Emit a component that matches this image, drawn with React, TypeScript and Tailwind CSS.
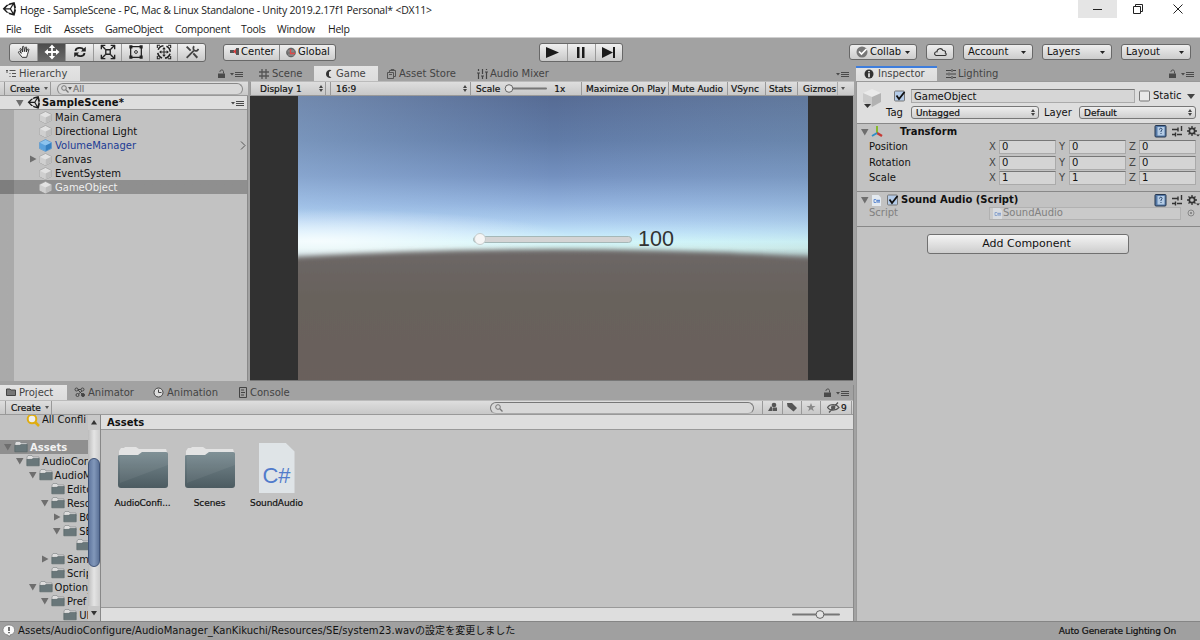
import { ReactNode } from "react";
import clsx from "clsx";

const menus = [
  { name: "File", width: "w-[28px]" },
  { name: "Edit", width: "w-[30px]" },
  { name: "Assets", width: "w-[41px]" },
  { name: "GameObject", width: "w-[70px]" },
  { name: "Component", width: "w-[66px]" },
  { name: "Tools", width: "w-[36px]" },
  { name: "Window", width: "w-[51px]" },
  { name: "Help", width: "w-[30px]" },
];

const sceneObjects = [
  { name: "Main Camera" },
  { name: "Directional Light" },
  { name: "VolumeManager", prefab: true },
  { name: "Canvas", parent: true },
  { name: "EventSystem" },
  { name: "GameObject", selected: true },
];

type Folder = { name: string; level: number; state?: "open" | "closed" };

const folders: Folder[] = [
  { name: "AudioCon", level: 1, state: "open" },
  { name: "AudioM", level: 2, state: "open" },
  { name: "Edito", level: 3 },
  { name: "Reso", level: 3, state: "open" },
  { name: "BG", level: 4, state: "closed" },
  { name: "SE", level: 4, state: "open" },
  { name: "", level: 5 },
  { name: "Sam", level: 3, state: "closed" },
  { name: "Scrip", level: 3 },
  { name: "Option_", level: 2, state: "open" },
  { name: "Pref", level: 3, state: "open" },
  { name: "UI", level: 4 },
];

const transformRows = [
  { name: "Position", value: "0" },
  { name: "Rotation", value: "0" },
  { name: "Scale", value: "1" },
];

export default function App() {
  return (
    <div className="flex h-[640px] w-[1200px] flex-col overflow-hidden whitespace-nowrap bg-[#a2a2a2] font-['DejaVu_Sans','Noto_Sans_CJK_JP',sans-serif] text-[10px] leading-[14px] text-[#111]">
      <WindowHeader />
      <MainToolbar />
      <div className="flex h-[555px]">
        <div className="flex w-[854px] flex-col">
          <div className="flex h-[319px]">
            <Hierarchy />
            <GameView />
          </div>
          <Project />
        </div>
        <Inspector />
      </div>
      <footer className="flex h-[19px] items-center border-t border-[#858585] bg-[#a0a0a0]">
        <svg width="14" height="14" viewBox="0 0 14 14" className="ml-[2px]">
          <path d="M7 1a5.7 5 0 0 1 1 9.900L7.500 13 6 11A5.500 5 0 0 1 7 1z" fill="#fafafa" stroke="#777" strokeWidth=".7" />
          <path d="M7 3v4M7 8v1.300" stroke="#444" strokeWidth="1.500" />
        </svg>
        <span className="ml-[2px] flex-1 tracking-[0.04px]">
          Assets/AudioConfigure/AudioManager_KanKikuchi/Resources/SE/system23.wavの設定を変更しました
        </span>
        <span className="mr-[24px] text-[9px] tracking-[-0.14px] [-webkit-text-stroke:0.2px]">
          Auto Generate Lighting On
        </span>
      </footer>
    </div>
  );
}

function WindowHeader() {
  return (
    <header className="h-[38px] border-b border-[#d0d0d0] bg-white font-['Open_Sans',sans-serif] text-[10.500px] text-[#1a1a1a]">
      <div className="flex h-[20px] items-start">
        <div className="ml-[2px] mt-[2px]">
          <UnityLogo size={14} />
        </div>
        <span className="ml-[4px] mt-[3px] w-[1058px] tracking-[-0.230px]">
          Hoge - SampleScene - PC, Mac &amp; Linux Standalone - Unity 2019.2.17f1 Personal* &lt;DX11&gt;
        </span>
        <div className="flex h-[18px] w-[39px] items-center justify-center bg-[#e5e5e5]">
          <div className="h-px w-[9px] bg-[#222]" />
        </div>
        <svg width="40" height="18" fill="none" stroke="#222">
          <path d="M16.500 6.500h7v7h-7zM18.500 6V4.500h7v7H24" />
        </svg>
        <svg width="40" height="18" fill="none" stroke="#222">
          <path d="M16.500 4.500l9 9M25.500 4.500l-9 9" />
        </svg>
      </div>
      <nav className="ml-[6px] flex pt-[2px] tracking-[-0.300px]">
        {menus.map((menu) => (
          <span key={menu.name} className={menu.width}>
            {menu.name}
          </span>
        ))}
      </nav>
    </header>
  );
}

function MainToolbar() {
  return (
    <div className="flex h-[28px] items-center">
      <div className="ml-[9px] flex h-[19px] w-[197px] rounded-[3px] border border-[#686868] bg-linear-to-b from-[#f0f0f0] to-[#c8c8c8]">
        <Tool>
          <path
            d="M7 15L3 10c-1-1.500 1-2 1.500-.8L6 10.500 4.500 6c0-1.200 1.300-1.200 1.600 0L7.500 9 7.300 3.500c0-1.300 1.500-1.300 1.600 0L9.500 8.500l1-4.500c.3-1.200 1.700-.9 1.500.3L11.500 9l1.500-3c.6-1 1.800-.4 1.400.6L13 11.500 12 15z"
            fill="#f5f5f5"
          />
        </Tool>
        <Tool active>
          <path d="M9 3v12M3 9h12" strokeWidth="2" stroke="#fff" />
          <path d="M9 .5l3.500 4h-7zM9 17.500l3.500-4h-7zM.5 9l4-3.500v7zM17.500 9l-4-3.500v7z" fill="#fff" stroke="none" />
        </Tool>
        <Tool>
          <path d="M4 8c0-4 7-5 9-1.500M14 10c0 4-7 5-9 1.500" strokeWidth="2" />
          <path d="M15.500 3v5.500H10zM2.500 15V9.500H8z" fill="#222" stroke="none" />
        </Tool>
        <Tool>
          <path d="M6.500 6.500h5v5h-5z" strokeWidth="1.500" />
          <path d="M1 1.500h5M1.500 1v5M17 1.500h-5M16.500 1v5M1 16.500h5M1.500 17v-5M17 16.500h-5M16.500 17v-5M2 2l4 4M16 2l-4 4M2 16l4-4M16 16l-4-4" strokeWidth="1.500" />
        </Tool>
        <Tool>
          <path d="M3 3h12v12H3z" strokeWidth="1.400" />
          <path d="M1.500 1.500h3.500v3.500H1.500zM13 1.500h3.500v3.500H13zM1.500 13h3.500v3.500H1.500zM13 13h3.500v3.500H13z" fill="#222" stroke="none" />
          <circle cx="9" cy="9" r="1.600" strokeWidth="1" />
        </Tool>
        <Tool>
          <circle cx="9" cy="9" r="7" strokeWidth="1.800" strokeDasharray="7.500 3.500" strokeDashoffset="-2" />
          <path d="M9 5v8M5 9h8" strokeWidth="1.100" />
          <path d="M9 3.500l2 2.500H7zM9 14.500l2-2.500H7zM3.500 9L6 7v4zM14.500 9L12 7v4z" fill="#222" stroke="none" />
          <path d="M1.500 4.500v-3h3M13.500 1.500h3v3M1.500 13.500v3h3M16.500 13.500v3h-3" strokeWidth="1.200" />
        </Tool>
        <Tool last>
          <path d="M3 3l4.500 4.500M10.500 10.500L15 15.500" strokeWidth="2.200" stroke="#444" />
          <path d="M3 15.500l8-8" strokeWidth="2" stroke="#444" />
          <path d="M11.500 2.500c-2 1.500-1 5 1.500 5.200 1.500.2 2.800-.7 3-2.200" strokeWidth="2" stroke="#444" />
        </Tool>
      </div>
      <div className="ml-[17px] flex h-[17px] w-[113px] items-center rounded-[3px] border border-[#686868] bg-linear-to-b from-[#eee] to-[#ccc]">
        <div className="flex h-full w-[56px] items-center border-r border-[#888] pl-[6px]">
          <svg width="10" height="10" className="mr-px">
            <path d="M0 3h4v3H0zM6 1h3v7H6z" fill="#555" />
            <path d="M3 4.500L6 2v5z" fill="#d43c3c" />
          </svg>
          Center
        </div>
        <svg width="11" height="11" className="ml-[6px] mr-px" fill="none">
          <circle cx="5" cy="5.500" r="4.300" fill="#777" stroke="#555" />
          <path d="M1.500 4h7M2 8h6" stroke="#aaa" strokeWidth=".6" />
          <path d="M4.500 2v4.500H9" stroke="#e04848" strokeWidth="1.300" />
        </svg>
        Global
      </div>
      <div className="ml-[203px] flex h-[19px] w-[84px] rounded-[3px] border border-[#686868] bg-linear-to-b from-[#f0f0f0] to-[#c8c8c8]">
        <svg width="82" height="17" fill="#1a1a1a">
          <path d="M6 3l13 5.500L6 14zM37 3h2.500v11H37zM42 3h2.500v11H42zM62 3l11 5.500L62 14zM73 3h2v11h-2z" />
          <path d="M27 0h1v17h-1zM55 0h1v17h-1z" fill="#999" />
        </svg>
      </div>
      <ToolbarButton className="ml-[226px] w-[68px] pl-[6px]">
        <svg width="12" height="12" className="mr-[2px]">
          <circle cx="6" cy="6" r="5.500" fill="#777" />
          <path d="M3 5.500l2.500 2.500L10.500 3" fill="none" stroke="#fff" strokeWidth="1.700" />
        </svg>
        Collab
      </ToolbarButton>
      <div className="ml-[9px] flex h-[16px] w-[28px] items-center justify-center rounded-[3px] border border-[#686868] bg-linear-to-b from-[#eee] to-[#ccc]">
        <svg width="15" height="12" fill="none" stroke="#333" strokeWidth="1.100">
          <path d="M3 9.500C.5 8.500 1.500 5.500 4 5.800 4 2.500 8.500 1.300 10 4.500c2.500 0 3 1.500 2.300 2.500 1.500.5 1 2.500-.3 2.500z" />
        </svg>
      </div>
      <ToolbarButton className="ml-[9px] w-[70px] pl-[4px]">Account</ToolbarButton>
      <ToolbarButton className="ml-[9px] w-[70px] pl-[4px]">Layers</ToolbarButton>
      <ToolbarButton className="ml-[9px] w-[70px] pl-[4px]">Layout</ToolbarButton>
    </div>
  );
}

function Tool({ children, active, last }: { children: ReactNode; active?: boolean; last?: boolean }) {
  return (
    <div
      className={clsx(
        "flex h-full w-[28px] shrink-0 items-center justify-center",
        active && "bg-linear-to-b from-[#4c4c4c] to-[#6a6a6a]",
        !last && "border-r border-[#999]"
      )}
    >
      <svg width="16" height="16" viewBox="0 0 18 18" fill="none" stroke="#222">
        {children}
      </svg>
    </div>
  );
}

function ToolbarButton({ children, className }: { children: ReactNode; className: string }) {
  return (
    <div
      className={clsx(
        "flex h-[16px] shrink-0 items-center rounded-[3px] border border-[#686868] bg-linear-to-b from-[#eee] to-[#ccc]",
        className
      )}
    >
      {children}
      <svg width="5" height="3" className="ml-auto mr-[6px]">
        <path d="M0 0h5L2.500 3z" fill="#222" />
      </svg>
    </div>
  );
}

function Tab({ children, active, className }: { children: ReactNode; active?: boolean; className: string }) {
  return (
    <div
      className={clsx(
        "flex h-[15px] shrink-0 items-center text-[#444]",
        active && "bg-linear-to-b from-[#e4e4e4] to-[#dcdcdc]",
        className
      )}
    >
      {children}
    </div>
  );
}

function PanelMenu({ lock, className }: { lock?: boolean; className?: string }) {
  return (
    <svg width="27" height="10" className={clsx("ml-auto", className)} fill="#4a4a4a">
      {lock && (
        <>
          <path d="M1 4.500h7V9H1z" />
          <path d="M3 3V2.500c0-2 3.500-2 3.500 0v2" fill="none" stroke="#4a4a4a" />
        </>
      )}
      <path d="M13 4h4l-2 2.500zM18 3h8v1h-8zM18 5h8v1h-8zM18 7h8v1h-8z" />
    </svg>
  );
}

function Hierarchy() {
  return (
    <section className="flex w-[248px] flex-col">
      <div className="flex items-center">
        <Tab active className="w-[80px] pl-[6px]">
          <svg width="11" height="10" className="mr-[2px]" stroke="#555">
            <path d="M0 1.500h2M3.500 1.500h6M3.500 4.500h1M6 4.500h4M3.500 7.500h1M6 7.500h4" />
            <path d="M1 2v2" />
          </svg>
          Hierarchy
        </Tab>
        <PanelMenu lock className="mr-[4px]" />
      </div>
      <div className="flex h-[15px] items-center border-y border-[#999] border-t-[#bbb] bg-linear-to-b from-[#dedede] to-[#c8c8c8] text-[9px] [-webkit-text-stroke:0.2px]">
        <div className="ml-[4px] flex h-full w-[47px] items-center border-x border-[#999] pl-[5px]">
          Create
          <Arrow className="ml-[4px]" />
        </div>
        <div className="ml-[6px] flex h-[12px] w-[186px] items-center rounded-full border border-[#888] border-b-[#aaa] bg-[#d8d8d8] pl-[3px] text-[#777]">
          <SearchGlyph />
          <Arrow className="ml-[-1px] mr-px" />
          All
        </div>
      </div>
      <div className="flex h-[285px] flex-col border-r border-[#8a8a8a] bg-[#c2c2c2]">
        <div className="flex h-[14px] items-center border-b border-[#999] bg-[#dedede] font-bold">
          <Triangle open className="ml-[15px] mr-[3px]" />
          <UnityLogo size={13} />
          <span className="ml-[2px] pt-px tracking-[0.1px]">SampleScene*</span>
          <PanelMenu className="mr-[2px]" />
        </div>
        <div className="flex flex-1 flex-col bg-linear-to-r from-[#aaa] from-[14px] to-[#c2c2c2] to-[14px]">
          {sceneObjects.map((item) => (
            <div
              key={item.name}
              className={clsx(
                "flex h-[14px] items-center",
                item.prefab && "text-[#1c3c95]",
                item.selected && "bg-linear-to-r from-[#7e7e7e] from-[14px] to-[#8f8f8f] to-[14px] text-[#eee]"
              )}
            >
              <div className="flex w-[39px] justify-end pr-[2px]">{item.parent && <Triangle />}</div>
              <Cube prefab={item.prefab} />
              <span className="ml-[3px] pt-[2px]">{item.name}</span>
              {item.prefab && (
                <svg width="6" height="9" className="ml-auto mr-[1px]" fill="none" stroke="#555">
                  <path d="M1 .5l4 4-4 4" />
                </svg>
              )}
            </div>
          ))}
        </div>
      </div>
    </section>
  );
}

function GameView() {
  return (
    <section className="ml-[2px] flex w-[604px] flex-col">
      <div className="flex items-center">
        <Tab className="w-[64px] pl-[9px]">
          <svg width="11" height="10" className="mr-[2px]" stroke="#555" strokeWidth="1.300">
            <path d="M3 0v10M7 0v10M0 3h10M0 7h10" />
          </svg>
          Scene
        </Tab>
        <Tab active className="w-[64px] pl-[10px]">
          <svg width="10" height="10" className="mr-[2px]">
            <path d="M7.500 1.200A4 4 0 1 0 7.500 8.600L5 7V3z" fill="#333" />
          </svg>
          Game
        </Tab>
        <Tab className="w-[99px] pl-[9px]">
          <svg width="10" height="10" className="mr-[2px]" fill="none" stroke="#555">
            <path d="M.5 3.500h6v6h-6zM2.500 3V1.500h6v6H7M4 1V.5h3v.5M2 5.500h3" />
          </svg>
          Asset Store
        </Tab>
        <Tab className="w-[90px]">
          <svg width="11" height="10" className="mr-[2px]" stroke="#444" strokeWidth="1.200">
            <path d="M1.500 0v2M1.500 4v6M5.500 0v5M5.500 7v3M9.500 0v1M9.500 3v7M0 4h3M4 7h3M8 3h3" />
          </svg>
          Audio Mixer
        </Tab>
        <PanelMenu className="mr-[4px]" />
      </div>
      <div className="flex h-[15px] items-center border-y border-l border-[#999] border-t-[#bbb] bg-linear-to-b from-[#dedede] to-[#c8c8c8] text-[9px] [-webkit-text-stroke:0.2px]">
        <div className="ml-[4px] flex h-full w-[71px] items-center border-r border-[#999] pl-[5px]">
          Display 1
          <UpDown className="ml-auto mr-[2px]" />
        </div>
        <div className="ml-[4px] flex h-full w-[141px] items-center border-x border-[#999] pl-[5px]">
          16:9
          <UpDown className="ml-auto mr-[3px]" />
        </div>
        <div className="flex h-full w-[110px] items-center pl-[5px]">
          Scale
          <svg width="45" height="11" className="ml-[4px]">
            <path d="M4 5.500h38" stroke="#777" strokeWidth="2" strokeLinecap="round" />
            <circle cx="5" cy="5.500" r="3.800" fill="#e4e4e4" stroke="#666" />
          </svg>
          <span className="ml-[5px]">1x</span>
        </div>
        <div className="h-full w-[87px] border-l border-[#999] pl-[4px]">Maximize On Play</div>
        <div className="h-full w-[59px] border-l border-[#999] pl-[3px]">Mute Audio</div>
        <div className="h-full w-[38px] border-l border-[#999] pl-[3px]">VSync</div>
        <div className="h-full w-[32px] border-l border-[#999] pl-[3px]">Stats</div>
        <div className="flex h-full w-[52px] items-center border-l border-[#999] pl-[5px]">
          Gizmos
          <div className="ml-auto h-full w-px bg-[#aaa]" />
          <Arrow className="ml-[3px] mr-[4px]" />
        </div>
      </div>
      <div className="relative flex h-[285px] w-[603px] justify-center border-b border-[#777] bg-[#313131]">
        <svg width="510" height="284" viewBox="0 0 510 284" className="ml-[2px]">
          <defs>
            <linearGradient id="sky" x1="0" y1="0" x2="0" y2="160" gradientUnits="userSpaceOnUse">
              <stop offset="0" stopColor="#566b94" />
              <stop offset=".28" stopColor="#607ba7" />
              <stop offset=".5" stopColor="#7390bf" />
              <stop offset=".67" stopColor="#90b0dc" />
              <stop offset=".78" stopColor="#aacbee" />
              <stop offset=".85" stopColor="#bfe2f8" />
              <stop offset=".91" stopColor="#d2f6fa" />
              <stop offset=".95" stopColor="#d2f0ee" />
              <stop offset="1" stopColor="#b0c4c4" />
            </linearGradient>
            <linearGradient id="glow">
              <stop offset="0" stopColor="#c8e8ff" stopOpacity=".24" />
              <stop offset=".5" stopColor="#c8e8ff" stopOpacity="0" />
              <stop offset="1" stopColor="#9cc0c8" stopOpacity=".16" />
            </linearGradient>
            <radialGradient id="sun">
              <stop offset="0" stopColor="#fff" stopOpacity=".8" />
              <stop offset="1" stopColor="#fff" stopOpacity="0" />
            </radialGradient>
            <linearGradient id="ground" x1="0" y1="0" x2="0" y2="1">
              <stop offset="0" stopColor="#6d6767" />
              <stop offset=".3" stopColor="#68625c" />
              <stop offset="1" stopColor="#6a605b" />
            </linearGradient>
            <filter id="haze" x="-10%" y="-10%" width="120%" height="120%">
              <feGaussianBlur stdDeviation="0 2.500" />
            </filter>
          </defs>
          <path d="M0 0h510v284H0z" fill="url(#sky)" />
          <path d="M0 0h510v284H0z" fill="url(#glow)" />
          <ellipse cx="20" cy="145" rx="260" ry="32" fill="url(#sun)" />
          <path d="M-20 162Q255 145 530 162V310H-20z" fill="url(#ground)" filter="url(#haze)" />
        </svg>
        <div className="absolute left-[223px] top-[131px] flex items-center font-['Liberation_Sans',sans-serif] text-[21.500px] leading-[24px] text-[#323232]">
          <div className="flex h-[7px] w-[159px] items-center rounded-full border border-[#a5b8b8] bg-[#d4d4d4]">
            <div className="size-[12px] shrink-0 rounded-full border border-[#c5cccc] bg-[#f5f5f5]" />
          </div>
          <span className="ml-[6px]">100</span>
        </div>
      </div>
    </section>
  );
}

function Project() {
  return (
    <section className="flex h-[236px] w-[854px] flex-col border-r border-[#8a8a8a]">
      <div className="flex items-center">
        <Tab active className="w-[67px] pl-[6px]">
          <svg width="11" height="9" className="mr-[2px]">
            <path d="M.5 2V1h3.500l1 1h4.500v5.500h-9z" fill="#777" stroke="#444" />
          </svg>
          Project
        </Tab>
        <Tab className="w-[78px] pl-[7px]">
          <svg width="12" height="11" className="mr-[2px]" fill="none" stroke="#444">
            <circle cx="2.500" cy="2.500" r="1.500" />
            <circle cx="8.500" cy="2.500" r="1.500" />
            <circle cx="3.500" cy="8" r="1.500" />
            <circle cx="9" cy="8" r="1.500" fill="#444" />
            <path d="M4 3l4 4M4 2.500h3M4.500 7L8 4" />
          </svg>
          Animator
        </Tab>
        <Tab className="w-[86px] pl-[8px]">
          <svg width="12" height="11" className="mr-[2px]" fill="none" stroke="#444">
            <circle cx="5.500" cy="5.500" r="4.500" fill="#ddd" />
            <path d="M5.500 2.500v3h3" />
          </svg>
          Animation
        </Tab>
        <Tab className="w-[80px] pl-[7px]">
          <svg width="10" height="11" className="mr-[2px]" fill="none" stroke="#444">
            <path d="M1.500.5h7v10h-7zM3 3h3M3 5.500h4M3 8h3" />
          </svg>
          Console
        </Tab>
        <PanelMenu lock className="mr-[3px]" />
      </div>
      <div className="flex h-[15px] items-center border-y border-[#999] border-t-[#bbb] bg-linear-to-b from-[#dedede] to-[#c8c8c8] text-[9px] [-webkit-text-stroke:0.2px]">
        <div className="ml-[5px] flex h-full w-[47px] items-center border-x border-[#999] pl-[5px]">
          Create
          <Arrow className="ml-[4px]" />
        </div>
        <div className="ml-[438px] flex h-[12px] w-[264px] items-center rounded-full border border-[#777] border-b-[#aaa] bg-[#d8d8d8] pl-[4px]">
          <SearchGlyph />
        </div>
        <svg width="64" height="13" className="ml-[8px]" fill="#555">
          <path d="M.5 0v13M20.500 0v13M39.500 0v13M58.500 0v13" stroke="#999" />
          <circle cx="12" cy="4" r="2.300" />
          <path d="M6 10l3-5 1.500 2v3zM11 6.500h4V10h-4zM25 2l5 0 5 5-3.500 3.500-6-5z" />
          <path d="M49 2l1.200 3h3.300l-2.700 2 1 3.300L49 8.300l-2.800 2 1-3.300-2.700-2h3.300z" fill="#888" />
        </svg>
        <svg width="14" height="11" className="ml-px" fill="none" stroke="#555" strokeWidth="1.200">
          <path d="M.5 5.500C3 1.500 9 1.500 12 5.500 9 9 3 9 .5 5.500zM11 .5L2 10.500" />
          <circle cx="6.200" cy="5.500" r="1.600" fill="#555" />
        </svg>
        <span>9</span>
        <div className="ml-[4px] h-full w-px bg-[#999]" />
      </div>
      <div className="flex h-[206px] bg-[#c2c2c2]">
        <div className="flex w-[88px] flex-col overflow-hidden">
          <div className="mt-[-2px] flex h-[14px] shrink-0 items-center pl-[26px]">
            <svg width="15" height="14" className="shrink-0" fill="none">
              <circle cx="6" cy="6" r="4.300" fill="#eee" stroke="#e0ad10" strokeWidth="2" />
              <path d="M9 9l4 4" stroke="#e0ad10" strokeWidth="2.500" />
            </svg>
            <span className="ml-px">All Confli</span>
          </div>
          <div className="mt-[13px] flex h-[14px] shrink-0 items-center bg-[#8f8f8f] pl-[3px] font-bold text-[#f2f2f2]">
            <Triangle open />
            <SmallFolder />
            <span className="pt-px">Assets</span>
          </div>
          {folders.map((folder, i) => (
            <div
              key={i}
              className="flex h-[14px] shrink-0 items-center"
              style={{ paddingLeft: 3 + folder.level * 12.3 }}
            >
              {folder.state ? <Triangle open={folder.state == "open"} /> : <div className="w-[9px] shrink-0" />}
              <SmallFolder />
              <span className="pt-[2px]">{folder.name}</span>
            </div>
          ))}
        </div>
        <div className="flex w-[13px] flex-col border-r border-[#888] bg-linear-to-r from-[#bbb] via-[#e4e4e4] to-[#ccc]">
          <ScrollEnd up />
          <div className="mt-[28px] h-[109px] rounded-full border border-[#3f5377] bg-linear-to-r from-[#60779f] via-[#8298ba] to-[#5d7398]" />
          <div className="flex-1" />
          <ScrollEnd />
        </div>
        <div className="flex w-[752px] flex-col">
          <div className="h-[15px] border-b border-[#999] bg-[#dedede] pl-[6px] pt-px font-bold">Assets</div>
          <div className="flex flex-1 pl-[8px] pt-[13px]">
            <Asset name="AudioConfi...">
              <BigFolder />
            </Asset>
            <Asset name="Scenes">
              <BigFolder />
            </Asset>
            <Asset name="SoundAudio">
              <div className="flex h-[50px] w-[36px] items-end justify-center bg-[#dfe4e7] pb-[5px] font-['Liberation_Sans',sans-serif] text-[22px] leading-[24px] text-[#517bcb] [clip-path:polygon(0_0,76%_0,100%_17%,100%_100%,0_100%)]">
                C#
              </div>
            </Asset>
          </div>
          <div className="flex h-[14px] items-center justify-end border-t border-[#999] bg-[#dedede] pr-[12px]">
            <svg width="50" height="11">
              <path d="M2 5.500h46" stroke="#777" strokeWidth="2" strokeLinecap="round" />
              <circle cx="29" cy="5.500" r="3.900" fill="#e4e4e4" stroke="#666" />
            </svg>
          </div>
        </div>
      </div>
    </section>
  );
}

function Asset({ name, children }: { name: string; children: ReactNode }) {
  return (
    <div className="flex w-[67px] flex-col items-center text-[9px] tracking-[-0.1px] [-webkit-text-stroke:0.2px]">
      <div className="flex h-[53px] items-start [-webkit-text-stroke:0]">{children}</div>
      <span>{name}</span>
    </div>
  );
}

function Inspector() {
  return (
    <section className="ml-[2px] flex w-[344px] flex-col">
      <div className="flex items-center">
        <Tab active className="w-[81px] border-t-2 border-[#3e7ddc] pb-[2px] pl-[8px]">
          <svg width="10" height="10" className="mr-[4px]">
            <circle cx="5" cy="5" r="4.500" fill="#333" />
            <path d="M5 2v1.300M5 4.300v4" stroke="#fff" strokeWidth="1.500" />
          </svg>
          Inspector
        </Tab>
        <Tab className="w-[100px] pl-[9px]">
          <svg width="10" height="10" className="mr-[2px]" stroke="#444">
            <path d="M0 1.500h5M7 1.500h3M0 5h2M4 5h6M0 8.500h5M7 8.500h3M6 0v3M3 3.500v3M6 7v3" />
          </svg>
          Lighting
        </Tab>
        <PanelMenu lock className="mr-[5px]" />
      </div>
      <div className="flex h-[540px] flex-col border-l border-t border-[#999] bg-[#c2c2c2]">
        <div className="flex h-[41px] bg-[#dedede]">
          <div className="pl-[5px] pt-[7px]">
            <svg width="21" height="20">
              <path d="M1 4l9-4 9 4v9l-9 5-9-5z" fill="#eaeaea" />
              <path d="M1 4l9 4v10l-9-5z" fill="#cacaca" />
              <path d="M19 4l-9 4v10l9-5z" fill="#b2b2b2" />
              <path d="M2 15h7l-3.500 4z" fill="#333" />
            </svg>
          </div>
          <div className="flex flex-1 flex-col gap-[3px] pl-[3px] pt-[7px]">
            <div className="flex h-[14px] items-center">
              <Checkbox checked className="ml-[8px]" />
              <div className="ml-[5px] h-[14px] w-[224px] border border-[#aaa] border-t-[#777] bg-[#d6d6d6] pl-[2px] leading-[13px]">
                GameObject
              </div>
              <Checkbox className="ml-[4px]" />
              <span className="ml-[2px]">Static</span>
              <svg width="8" height="5" className="ml-[5px]">
                <path d="M0 0h8L4 5z" fill="#444" />
              </svg>
            </div>
            <div className="flex h-[13px] items-center">
              <span className="w-[25px]">Tag</span>
              <Select className="w-[128px]">Untagged</Select>
              <span className="ml-[5px] w-[35px]">Layer</span>
              <Select className="w-[117px]">Default</Select>
            </div>
          </div>
        </div>
        <div className="h-[68px] border-t border-[#888]">
          <div className="flex h-[15px] items-center font-bold">
            <Triangle open className="ml-[3px]" />
            <svg width="14" height="12" className="ml-[1px] mr-[16px]" fill="none" strokeWidth="2">
              <path d="M7 0v7" stroke="#86b92c" />
              <path d="M7 7l5 3" stroke="#c63a34" strokeWidth="2.500" />
              <path d="M7 7l-5 3" stroke="#2e8fc7" />
            </svg>
            <span className="pt-px">Transform</span>
            <ComponentTools />
          </div>
          {transformRows.map((row) => (
            <div key={row.name} className="flex h-[15.800px] items-center">
              <span className="ml-[12px] w-[120px]">{row.name}</span>
              <Field axis="X" value={row.value} />
              <Field axis="Y" value={row.value} />
              <Field axis="Z" value={row.value} />
            </div>
          ))}
        </div>
        <div className="h-[36px] border-y border-[#888]">
          <div className="flex h-[14px] items-center pt-[2px] font-bold">
            <Triangle open className="ml-[3px]" />
            <ScriptGlyph className="ml-[3px]" />
            <Checkbox checked className="ml-[6px] mr-[2px]" />
            Sound Audio (Script)
            <ComponentTools />
          </div>
          <div className="flex h-[14px] items-center text-[#808080]">
            <span className="ml-[12px] w-[120px]">Script</span>
            <div className="flex h-[13px] w-[192px] items-center border border-[#b1b1b1] bg-[#cacaca] pl-[3px]">
              <ScriptGlyph className="mr-[1px] opacity-60" />
              SoundAudio
            </div>
            <svg width="8" height="8" className="ml-[6px]">
              <circle cx="4" cy="4" r="3" fill="none" stroke="#888" />
              <circle cx="4" cy="4" r="1" fill="#777" />
            </svg>
          </div>
        </div>
        <button className="ml-[70px] mt-[7px] h-[20px] w-[202px] rounded-[3px] border border-[#707070] bg-linear-to-b from-[#f4f4f4] to-[#cdcdcd] pr-[3px] text-[11px]">
          Add Component
        </button>
      </div>
    </section>
  );
}

function Field({ axis, value }: { axis: string; value: string }) {
  return (
    <div className="flex w-[70px] items-center">
      <span className="w-[10px] text-[#444]">{axis}</span>
      <div className="h-[14px] w-[57px] border border-[#aaa] border-t-[#777] bg-[#d4d4d4] pl-[2px] leading-[12px]">
        {value}
      </div>
    </div>
  );
}

function Select({ children, className }: { children: ReactNode; className: string }) {
  return (
    <div
      className={clsx(
        "flex h-[13px] items-center rounded-[3px] border border-[#777] bg-linear-to-b from-[#eee] to-[#cfcfcf] pl-[4px] text-[9px] [-webkit-text-stroke:0.2px]",
        className
      )}
    >
      {children}
      <UpDown className="ml-auto mr-[3px]" />
    </div>
  );
}

function Checkbox({ checked, className }: { checked?: boolean; className?: string }) {
  return (
    <svg width="12" height="12" viewBox="0 0 12 12" className={clsx("shrink-0", className)} fill="none">
      <rect x=".5" y="1" width="10" height="10" rx="1" fill={checked ? "#b4cbe8" : "#e8e8e8"} stroke="#777" />
      {checked && <path d="M2.500 5.500l2.500 3.500L10.500 2" stroke="#111" strokeWidth="1.800" />}
    </svg>
  );
}

function ComponentTools() {
  return (
    <svg width="47" height="13" viewBox="0 0 47 13" className="ml-auto mr-[-1px] shrink-0" fill="none">
      <rect x="1" y=".5" width="11" height="11.500" rx="1" fill="#567aa8" stroke="#24364f" />
      <rect x="3.500" y="2" width="7" height="8.500" fill="#b4cbe4" />
      <path d="M5.500 4.500c0-2 3-1.500 2.500.3L7 6v1M7 8v1" stroke="#29466e" />
      <path d="M18 4.500h6M18 9.500h3M23 9.500h5M24 2.500v4M21.500 7.500v4M27.500 1v5" stroke="#333" strokeWidth="1.400" />
      <circle cx="38" cy="6" r="2.700" stroke="#333" strokeWidth="1.700" />
      <path d="M38 1v2M38 9v2M33 6h2M41 6h2M34.500 2.500l1.300 1.300M41.500 2.500l-1.300 1.300M34.500 9.500l1.300-1.300M41.500 9.500l-1.300-1.300" stroke="#333" strokeWidth="1.300" />
      <path d="M42 9.500h4l-2 2z" fill="#333" />
    </svg>
  );
}

function ScriptGlyph({ className }: { className?: string }) {
  return (
    <svg width="9" height="11" viewBox="0 0 9 11" className={clsx("shrink-0", className)} fill="none">
      <path d="M0 0h6.500L9 2.500V11H0z" fill="#e3e9ef" />
      <path d="M4 4.500H2v3h2M5 4.500v3M7 4.500v3M4.500 5.500h3.500M4.500 7h3.500" stroke="#4b7bcb" strokeWidth=".8" />
    </svg>
  );
}

function Triangle({ open, className }: { open?: boolean; className?: string }) {
  return (
    <svg width="9" height="8" viewBox="0 0 9 8" className={clsx("shrink-0", className)} fill="#6e6e6e">
      <path d={open ? "M1 1h7.500L4.800 7.500z" : "M2 .5L8.500 4 2 7.500z"} />
    </svg>
  );
}

function Arrow({ className }: { className?: string }) {
  return (
    <svg width="4" height="4" viewBox="0 0 4 4" className={className}>
      <path d="M0 0h4L2 3z" fill="#555" />
    </svg>
  );
}

function UpDown({ className }: { className?: string }) {
  return (
    <svg width="4" height="7" className={className}>
      <path d="M0 3l2-3 2 3zM0 4l2 3 2-3z" fill="#444" />
    </svg>
  );
}

function SearchGlyph() {
  return (
    <svg width="8" height="8" fill="none" stroke="#777">
      <circle cx="3" cy="3" r="2.300" />
      <path d="M4.800 4.800L7.500 7.500" strokeWidth="1.300" />
    </svg>
  );
}

function ScrollEnd({ up }: { up?: boolean }) {
  return (
    <div className="flex h-[15px] items-center justify-center bg-[#c8c8c8]">
      <svg width="6" height="5">
        <path d={up ? "M0 4.500h6L3 0z" : "M0 0h6L3 4.500z"} fill="#333" />
      </svg>
    </div>
  );
}

function Cube({ prefab }: { prefab?: boolean }) {
  return (
    <svg width="13" height="13" viewBox="0 0 13 13" className="shrink-0">
      <path d="M.5 3.500l6-3 6 3v6l-6 3-6-3z" fill={prefab ? "#8cc3ee" : "#e2e2e2"} stroke={prefab ? "#4d8bc4" : "#999"} strokeWidth=".6" />
      <path d="M.8 3.800l5.700 2.700v5.700L.8 9.300z" fill={prefab ? "#5ba1dc" : "#cfcfcf"} />
      <path d="M12.200 3.800L6.500 6.500v5.700l5.700-2.900z" fill={prefab ? "#367fc0" : "#bdbdbd"} />
    </svg>
  );
}

function UnityLogo({ size }: { size: number }) {
  return (
    <svg width={size} height={size} viewBox="0 0 24 24" className="shrink-0" fill="#1c1c1c">
      <path
        fillRule="evenodd"
        d="M24 9.300L21.500 0l-9.300 2.500-1.400 2.400H8L1.200 11.700 8 18.500h2.800l1.400 2.400 9.300 2.500 2.500-9.300-1.400-2.400zM10.400 17.400l-4.600-4.700h8l4 6.950-6.400-1.650zM10.400 6.050l-4.600 4.700h8l4-6.950-6.400 1.650zM19.500 4.850l1.750 6.850-1.750 6.850-4-6.850z"
      />
    </svg>
  );
}

function SmallFolder() {
  return (
    <svg width="14" height="12" viewBox="0 0 14 12" className="ml-[2px] mr-[2px] shrink-0">
      <path d="M1 2l1-1.500h4L7 2h6v3H1z" fill="#dedede" stroke="#7c8283" strokeWidth=".6" />
      <path d="M.8 4.500l5-.2L7 3.500h6.200v7.300H.8z" fill="#69777a" stroke="#536063" strokeWidth=".6" />
    </svg>
  );
}

function BigFolder() {
  return (
    <svg width="52" height="44" viewBox="0 0 52 44" className="mt-[3px]">
      <defs>
        <linearGradient id="folder" x1="0" y1="0" x2="0" y2="1">
          <stop offset="0" stopColor="#788a90" />
          <stop offset="1" stopColor="#4c5b61" />
        </linearGradient>
      </defs>
      <path d="M2 12V5l2-3h3l1-1h11l3 2h27l1 3v6z" fill="#e3e3e3" />
      <path d="M1 10q0-1 2-1h18l4-3h24q2 0 2 2v31q0 3-3 3H4q-3 0-3-3z" fill="url(#folder)" />
      <path d="M51 9v10L3 37V10l18-1 4-3h24z" fill="#fff" opacity=".06" />
    </svg>
  );
}
